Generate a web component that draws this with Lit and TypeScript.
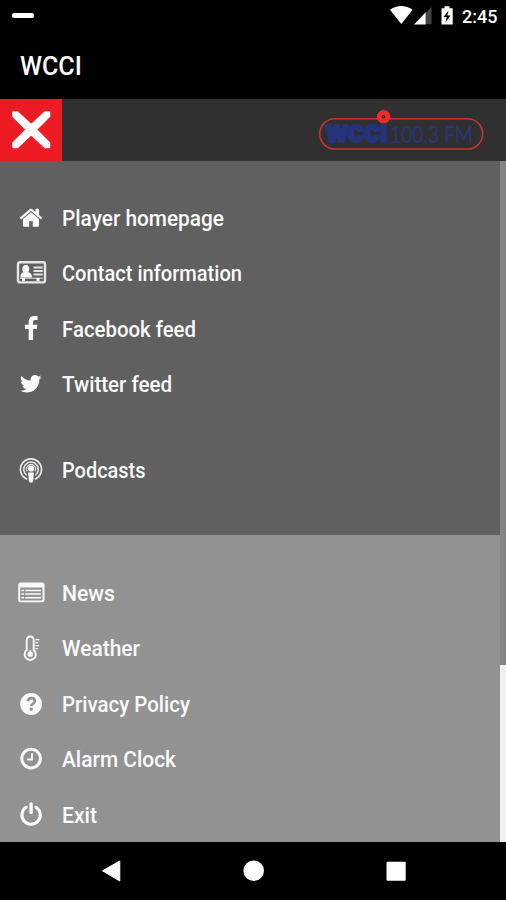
import { LitElement, html, svg, css } from "lit";
import { customElement, property } from "lit/decorators.js";

const W = "#fafafa";

const icons: Record<string, unknown> = {
  home: svg`<svg x="3.5" y="3.2" width="25" height="25" viewBox="0 0 1792 1792"><path fill=${W} d="M1472 992v480q0 26-19 45t-45 19h-384v-384h-256v384h-384q-26 0-45-19t-19-45v-480q0-1 .5-3t.5-3l575-474 575 474q1 2 1 6zm223-69l-62 74q-8 9-21 11h-3q-13 0-21-7l-692-577-692 577q-12 8-24 7-13-2-21-11l-62-74q-8-10-7-23.5t11-21.5l719-599q32-26 76-26t76 26l244 204v-195q0-14 9-23t23-9h192q14 0 23 9t9 23v408l219 182q10 8 11 21.5t-7 23.5z"/></svg>`,
  contact: svg`<g fill="none" stroke="#e6e6e6"><rect x="3" y="5.2" width="27" height="20.2" rx="1.8" stroke-width="2.4"/><path d="M18.5 10.4h9.200M18.5 13.900h9.200M18.5 17.400h9.200" stroke-width="2"/><path d="M5 21.2h23" stroke-width="1"/></g><path fill=${W} d="M10.8 8c2.500 0 3.700 1.800 3.500 4.200-.1 1.400-.6 2.400-1.200 3 2.400.5 3.800 1.500 3.800 5.400H5.500c0-3.900 1-4.900 3.200-5.400-.7-.6-1.200-1.600-1.300-3-.2-2.400.9-4.200 3.400-4.200zM7 21h3v3H7zM21.500 21h3v3h-3z"/>`,
  facebook: svg`<svg x="3" y="2.900" width="26" height="26" viewBox="0 0 1792 1792"><path fill=${W} d="M1343 12v264h-157q-86 0-116 36t-30 108v189h293l-39 296h-254v759h-306v-759h-255v-296h255v-218q0-186 104-288.5t277-102.5q147 0 228 12z"/></svg>`,
  twitter: svg`<svg x="3.500" y="3.600" width="24.500" height="24.500" viewBox="0 0 1792 1792"><path fill=${W} d="M1684 408q-67 98-162 167 1 14 1 42 0 130-38 259.5t-115.5 248.5-184.5 210.5-258 146-323 54.5q-271 0-496-145 35 4 78 4 225 0 401-138-105-2-188-64.5t-114-159.5q33 5 61 5 43 0 85-11-112-23-185.5-111.5t-73.5-205.5v-4q68 38 146 41-66-44-105-115t-39-154q0-88 44-163 121 149 294.5 238.5t371.5 99.5q-8-38-8-74 0-134 94.5-228.5t228.5-94.5q140 0 236 102 109-21 205-78-37 115-142 178 93-10 186-50z"/></svg>`,
  podcast: svg`<g fill="none" stroke="#ededed"><path d="M12.200 25.200a10.500 10.500 0 1 1 7.600 0" stroke-width="1.700"/><path d="M11.700 21.200a7.300 7.300 0 1 1 8.600 0" stroke-width="1.500"/><path d="M12.200 17.500a4.500 4.500 0 1 1 7.600 0" stroke-width="1.100"/></g><circle cx="16" cy="14.500" r="3.100" fill=${W}/><path fill=${W} d="M13.100 18.500h5.800l-.7 8.500q-.3 1.800-2.200 1.800t-2.200-1.800z"/>`,
  news: svg`<path fill=${W} fill-rule="evenodd" d="M5.700 5.500h21.300a2.500 2.500 0 0 1 2.500 2.500v14.800a2.500 2.500 0 0 1-2.500 2.500H5.700a2.500 2.500 0 0 1-2.500-2.500V8a2.500 2.500 0 0 1 2.500-2.500zM5.200 10.600v12q0 .9.900.9h20.500q.9 0 .9-.9V10.600z"/><path stroke=${W} stroke-width="1.500" d="M6.500 13.400h2.600M10.300 13.400h15.700M6.500 17.100h2.600M10.300 17.100h15.700M6.500 20.800h2.600M10.300 20.800h15.700"/>`,
  weather: svg`<path d="M11.700 18V8a3.500 3.500 0 0 1 7 0v10a5.600 5.600 0 1 1-7 0z" fill="none" stroke=${W} stroke-width="1.900"/><path d="M15.200 18v4" stroke=${W} stroke-width="1.300"/><circle cx="15.200" cy="22.300" r="2.700" fill=${W}/><path stroke=${W} stroke-width="1.300" d="M20.500 7.700h3.800M20.500 10.700h2.500M20.500 13.700h3.800M20.500 16.700h2.500"/>`,
  question: svg`<circle cx="16.100" cy="16" r="10.900" fill=${W}/><path d="M12.700 13.100q.8-2.900 3.600-2.900 3.500 0 3.500 2.800 0 1.500-1.700 2.600-1.700 1-1.700 2.400" fill="none" stroke="#929292" stroke-width="2.700"/><path fill="#929292" d="M14.800 19.700h3v2.900h-3z"/>`,
  clock: svg`<circle cx="16.100" cy="15.600" r="9.300" fill="none" stroke=${W} stroke-width="3"/><path d="M17 10.300v6.200h-4.700" fill="none" stroke=${W} stroke-width="1.800"/>`,
  power: svg`<path d="M11.200 8.300a9.200 9.200 0 1 0 9.800 0" fill="none" stroke=${W} stroke-width="3.100" stroke-linecap="round"/><path d="M16.100 5v8.600" stroke=${W} stroke-width="3.400" stroke-linecap="round"/>`,
};

@customElement("menu-row")
class MenuRow extends LitElement {
  @property() icon = "";
  @property() label = "";
  @property({ type: Number }) length = 100;

  static styles = css`
    :host { display: flex; align-items: center; height: 55.4px; padding-left: 15px; }
    .icon { width: 32px; height: 32px; flex: none; }
    .label { width: 300px; height: 32px; margin-left: 15px; overflow: visible;
      font: 500 21.3px Roboto, "Liberation Sans", sans-serif; }
  `;

  render() {
    return html`<svg class="icon" viewBox="0 0 32 32">${icons[this.icon]}</svg>
      <svg class="label"><text x="0" y="23.500" fill="#fafafa" textLength=${this.length} lengthAdjust="spacingAndGlyphs">${this.label}</text></svg>`;
  }
}

@customElement("app-root")
class AppRoot extends LitElement {
  static styles = css`
    :host { display: flex; flex-direction: column; width: 506px; height: 900px; overflow: hidden;
      background: #000; font-family: Roboto, "Liberation Sans", sans-serif; color: #fff; }
    .status { height: 32px; display: flex; align-items: center; justify-content: space-between; padding: 0 9px 0 12px; }
    .dash { width: 22px; height: 5px; border-radius: 2px; background: #fff; margin-top: -1px; }
    .right { display: flex; align-items: center; }
    .time { font-size: 18px; font-weight: 500; width: 35px; margin-left: 8px; white-space: nowrap; }
    .title { height: 67px; box-sizing: border-box; padding: 19px 0 0 20px; font-size: 25px; line-height: 32px; font-weight: 500; }
    .bar { height: 62px; flex: none; background: #303030; display: flex; justify-content: space-between; padding-right: 18px; }
    .close { width: 62px; height: 62px; background: #ed1c24; }
    .logo { width: 170px; height: 62px; overflow: visible; }
    .view { display: flex; height: 681px; flex: none; overflow: hidden; }
    .list { flex: 1; overflow: hidden; background: #929292; }
    .group { box-sizing: border-box; }
    .main { height: 374px; background: #606060; padding-top: 29.300px; }
    .more { padding-top: 30.300px; }
    .pod { margin-top: 30.500px; }
    .track { width: 6px; background: #f0f0f0; }
    .thumb { height: 504px; background: #848484; }
    .nav { height: 58px; display: block; }
  `;

  row(icon: string, label: string, length: number, cls = "") {
    return html`<menu-row class=${cls} .icon=${icon} .label=${label} .length=${length}></menu-row>`;
  }

  render() {
    return html`
      <div class="status">
        <div class="dash"></div>
        <div class="right">
          <svg width="65" height="24" viewBox="390 4 65 24">
            <path fill="#fff" d="M391 9.800q11.300-7.500 22.600 0L402.300 24z"/>
            <path fill="#444" d="M432.500 7v17.300H427V12.500z"/>
            <path fill="#fff" d="M426.700 12.200v12.200H415z"/>
            <path fill="#fff" d="M442.500 8.300h3V6.300h5v2h3.200v16.300h-11.200z"/>
            <path fill="#000" d="M449.500 10.500l-5 6.500h3.200l-1.200 5.300 5-6.700h-3.200z"/>
          </svg>
          <span class="time">2:45</span>
        </div>
      </div>
      <div class="title">WCCI</div>
      <div class="bar">
        <svg class="close" viewBox="0 0 62 62"><path d="M13.500 13.500h3.700L31.200 26.500 45.300 13.500H49v3.700L35.600 30.600 49 44.200V48h-3.700L31.200 34.800 17.200 48h-3.700v-3.800l13.400-13.600-13.400-13.400z" fill="#fff" stroke="#fff" stroke-width="2.600" stroke-linejoin="round"/></svg>
        <svg class="logo" viewBox="318 99 170 62">
          <rect x="319.700" y="118.700" width="163" height="30.300" rx="15.150" fill="none" stroke="#c5352e" stroke-width="1.600"/>
          <text x="325.500" y="142.200" font-family="Inter" font-weight="900" font-size="23" textLength="61.500" lengthAdjust="spacingAndGlyphs" fill="#25337d" stroke="#25337d" stroke-width="1.900">WCCI</text>
          <text x="390" y="142.700" font-family="Lato" font-size="24" textLength="83" lengthAdjust="spacingAndGlyphs" fill="#29357a">100.3 FM</text>
          <circle cx="383.600" cy="116.800" r="4.300" fill="#302020" stroke="#e03229" stroke-width="5"/>
          <circle cx="383.600" cy="116.800" r=".8" fill="#e03229"/>
        </svg>
      </div>
      <div class="view">
        <div class="list">
          <div class="group main">
            ${this.row("home", "Player homepage", 162)}
            ${this.row("contact", "Contact information", 180)}
            ${this.row("facebook", "Facebook feed", 134)}
            ${this.row("twitter", "Twitter feed", 110)}
            ${this.row("podcast", "Podcasts", 83.500, "pod")}
          </div>
          <div class="group more">
            ${this.row("news", "News", 53)}
            ${this.row("weather", "Weather", 78)}
            ${this.row("question", "Privacy Policy", 128)}
            ${this.row("clock", "Alarm Clock", 114)}
            ${this.row("power", "Exit", 35)}
          </div>
        </div>
        <div class="track"><div class="thumb"></div></div>
      </div>
      <svg class="nav" width="506" height="58" viewBox="0 842 506 58" fill="#fff">
        <path d="M102.500 870.800L119.800 861v20z" stroke="#fff" stroke-width="1" stroke-linejoin="round"/>
        <circle cx="253.700" cy="870.700" r="10.300"/>
        <rect x="386.500" y="861.700" width="19.200" height="19" rx="1"/>
      </svg>`;
  }
}
